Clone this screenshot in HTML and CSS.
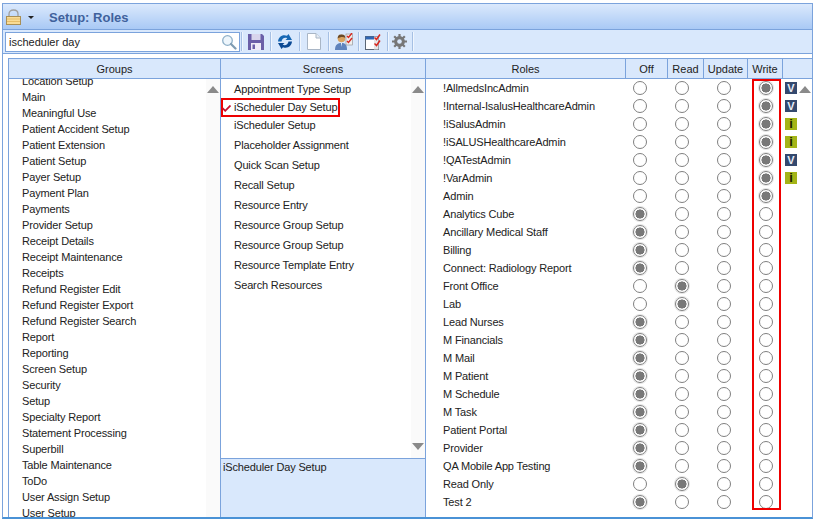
FILE: index.html
```html
<!DOCTYPE html>
<html lang="en">
<head>
<meta charset="utf-8">
<title>Setup: Roles</title>
<link rel="stylesheet" href="styles.css">
</head>
<body>
<div class="window">
  <header class="titlebar">
    <svg class="lock" width="15" height="16" viewBox="0 0 15 16"><path d="M3 8V5C3 2.500 5 1 7.500 1S12 2.500 12 5V8" fill="none" stroke="#a0a0a0" stroke-width="1.300"/><rect x=".5" y="7.500" width="14" height="8" fill="#f9dc96" stroke="#a98f55"/><path d="M1 10h13M1 12.500h13" stroke="#e6bd68"/></svg>
    <span class="caret"></span>
    <h1 class="title">Setup: Roles</h1>
  </header>
  <div class="toolbar">
    <div class="search">
      <span class="search-text">ischeduler day</span>
      <svg width="16" height="16" viewBox="0 0 16 16"><circle cx="6.500" cy="6.500" r="4.800" fill="#eef6fc" stroke="#8fb0c8" stroke-width="1.300"/><path d="M10 10l4.500 4.500" stroke="#7f9cb2" stroke-width="2.200" stroke-linecap="round"/></svg>
    </div>
    <span class="sep"></span>
    <span class="tool tool-save"><svg width="16" height="16" viewBox="0 0 16 16"><path d="M0 0h14l2 2v14H0z" fill="#6a5fa8"/><rect x="3.500" y="0" width="9" height="6" fill="#d8d5ec"/><rect x="3" y="9" width="10" height="7" fill="#eeecf7"/><rect x="4.500" y="10.500" width="2.500" height="4.500" fill="#6a5fa8"/></svg></span>
    <span class="sep"></span>
    <span class="tool tool-refresh"><svg width="16" height="15" viewBox="0 0 16 15"><path d="M1 7.500C1.300 3 5.500 0 10 1.800L11.500 0 15 6H8.500L10.300 4.200C7.500 3 5 4.500 4.500 7.500z" fill="#1667b4"/><path d="M15 7.500C14.700 12 10.500 15 6 13.200L4.500 15 1 9H7.500L5.700 10.800C8.500 12 11 10.500 11.500 7.500z" fill="#0c4a94"/></svg></span>
    <span class="sep"></span>
    <span class="tool tool-page"><svg width="14" height="17" viewBox="0 0 14 17"><path d="M.5 .5H9L13.500 5V16.500H.5z" fill="#fff" stroke="#a9b6c6"/><path d="M9 .5V5H13.500" fill="#e6ecf3" stroke="#a9b6c6"/></svg></span>
    <span class="sep"></span>
    <span class="tool tool-user"><svg width="18" height="17" viewBox="0 0 18 17"><circle cx="6.500" cy="5.500" r="3.800" fill="#d9a35f"/><path d="M2.700 5.500C2.700 2 4.500 1.500 6.500 1.500S10.300 2 10.300 5C8.500 3.500 5 4 2.700 5.500z" fill="#6b4a25"/><path d="M0 17C0 11.500 3 10 6.500 10S12 11.500 12 17z" fill="#5f83bd"/><path d="M6 10l.5 4 .5-4z" fill="#fff"/><rect x="11" y="1" width="6.500" height="11" fill="#eee" stroke="#8a8a8a" stroke-width=".6"/><path d="M12 3l1.500 1.500L17 0M12 8l1.500 1.500L17 5" fill="none" stroke="#d8281f" stroke-width="1.400"/></svg></span>
    <span class="sep"></span>
    <span class="tool tool-win"><svg width="16" height="16" viewBox="0 0 16 16"><rect x=".5" y="2.500" width="13" height="13" fill="#fff" stroke="#5a6675"/><rect x=".5" y="2.500" width="13" height="3" fill="#2f66b4"/><rect x="9" y="2.500" width="4.500" height="13" fill="#e6e6e6"/><path d="M9.500 3.500l2 2 3.500-5M9.500 9.500l2 2 3.500-5" fill="none" stroke="#d8281f" stroke-width="1.500"/></svg></span>
    <span class="sep"></span>
    <span class="tool tool-gear"><svg width="15" height="15" viewBox="0 0 15 15"><circle cx="7.500" cy="7.500" r="4" fill="none" stroke="#777" stroke-width="2.800"/><path d="M7.500 0v15M0 7.500h15M2.200 2.200l10.600 10.600M12.800 2.200L2.200 12.800" stroke="#777" stroke-width="2.200"/><circle cx="7.500" cy="7.500" r="2.300" fill="#d9e8fc"/></svg></span>
    <span class="sep"></span>
  </div>
  <main class="content">
    <div class="table">
      <div class="head">
        <div class="h h-groups">Groups</div>
        <div class="h h-screens">Screens</div>
        <div class="h h-roles">Roles</div>
        <div class="h h-off">Off</div>
        <div class="h h-read">Read</div>
        <div class="h h-update">Update</div>
        <div class="h h-write">Write</div>
        <div class="h h-flag"></div>
      </div>
      <div class="body">
        <section class="col-groups">
          <ul class="groups">
            <li>Location Setup</li><li>Main</li><li>Meaningful Use</li><li>Patient Accident Setup</li><li>Patient Extension</li><li>Patient Setup</li><li>Payer Setup</li><li>Payment Plan</li><li>Payments</li><li>Provider Setup</li><li>Receipt Details</li><li>Receipt Maintenance</li><li>Receipts</li><li>Refund Register Edit</li><li>Refund Register Export</li><li>Refund Register Search</li><li>Report</li><li>Reporting</li><li>Screen Setup</li><li>Security</li><li>Setup</li><li>Specialty Report</li><li>Statement Processing</li><li>Superbill</li><li>Table Maintenance</li><li>ToDo</li><li>User Assign Setup</li><li>User Setup</li>
          </ul>
          <div class="scrollbar"><span class="arrow-up"></span></div>
        </section>
        <section class="col-screens">
          <div class="screens-top">
            <ul class="screens">
              <li class="first">Appointment Type Setup</li>
              <li class="selected"><svg class="check" width="9" height="7" viewBox="0 0 9 7"><path d="M.5 3L3.200 5.800 8.500 .5" fill="none" stroke="#c8102e" stroke-width="1.800"/></svg><span>iScheduler Day Setup</span></li>
              <li class="third">iScheduler Setup</li>
              <li>Placeholder Assignment</li><li>Quick Scan Setup</li><li>Recall Setup</li><li>Resource Entry</li><li>Resource Group Setup</li><li>Resource Group Setup</li><li>Resource Template Entry</li><li>Search Resources</li>
            </ul>
            <div class="scrollbar scrollbar-both"><span class="arrow-up"></span><span class="arrow-down"></span></div>
          </div>
          <div class="description">iScheduler Day Setup</div>
        </section>
        <section class="col-roles">
          <div class="write-highlight"></div>
          <div class="role"><span class="name">!AllmedsIncAdmin</span><span class="cell"><i class="radio"></i></span><span class="cell"><i class="radio"></i></span><span class="cell"><i class="radio"></i></span><span class="cell last"><i class="radio on"></i></span><b class="flag flag-v">V</b></div>
          <div class="role"><span class="name">!Internal-IsalusHealthcareAdmin</span><span class="cell"><i class="radio"></i></span><span class="cell"><i class="radio"></i></span><span class="cell"><i class="radio"></i></span><span class="cell last"><i class="radio on"></i></span><b class="flag flag-v">V</b></div>
          <div class="role"><span class="name">!iSalusAdmin</span><span class="cell"><i class="radio"></i></span><span class="cell"><i class="radio"></i></span><span class="cell"><i class="radio"></i></span><span class="cell last"><i class="radio on"></i></span><b class="flag flag-i">i</b></div>
          <div class="role"><span class="name">!iSALUSHealthcareAdmin</span><span class="cell"><i class="radio"></i></span><span class="cell"><i class="radio"></i></span><span class="cell"><i class="radio"></i></span><span class="cell last"><i class="radio on"></i></span><b class="flag flag-i">i</b></div>
          <div class="role"><span class="name">!QATestAdmin</span><span class="cell"><i class="radio"></i></span><span class="cell"><i class="radio"></i></span><span class="cell"><i class="radio"></i></span><span class="cell last"><i class="radio on"></i></span><b class="flag flag-v">V</b></div>
          <div class="role"><span class="name">!VarAdmin</span><span class="cell"><i class="radio"></i></span><span class="cell"><i class="radio"></i></span><span class="cell"><i class="radio"></i></span><span class="cell last"><i class="radio on"></i></span><b class="flag flag-i">i</b></div>
          <div class="role"><span class="name">Admin</span><span class="cell"><i class="radio"></i></span><span class="cell"><i class="radio"></i></span><span class="cell"><i class="radio"></i></span><span class="cell last"><i class="radio on"></i></span></div>
          <div class="role"><span class="name">Analytics Cube</span><span class="cell"><i class="radio on"></i></span><span class="cell"><i class="radio"></i></span><span class="cell"><i class="radio"></i></span><span class="cell last"><i class="radio"></i></span></div>
          <div class="role"><span class="name">Ancillary Medical Staff</span><span class="cell"><i class="radio on"></i></span><span class="cell"><i class="radio"></i></span><span class="cell"><i class="radio"></i></span><span class="cell last"><i class="radio"></i></span></div>
          <div class="role"><span class="name">Billing</span><span class="cell"><i class="radio on"></i></span><span class="cell"><i class="radio"></i></span><span class="cell"><i class="radio"></i></span><span class="cell last"><i class="radio"></i></span></div>
          <div class="role"><span class="name">Connect: Radiology Report</span><span class="cell"><i class="radio on"></i></span><span class="cell"><i class="radio"></i></span><span class="cell"><i class="radio"></i></span><span class="cell last"><i class="radio"></i></span></div>
          <div class="role"><span class="name">Front Office</span><span class="cell"><i class="radio"></i></span><span class="cell"><i class="radio on"></i></span><span class="cell"><i class="radio"></i></span><span class="cell last"><i class="radio"></i></span></div>
          <div class="role"><span class="name">Lab</span><span class="cell"><i class="radio"></i></span><span class="cell"><i class="radio on"></i></span><span class="cell"><i class="radio"></i></span><span class="cell last"><i class="radio"></i></span></div>
          <div class="role"><span class="name">Lead Nurses</span><span class="cell"><i class="radio on"></i></span><span class="cell"><i class="radio"></i></span><span class="cell"><i class="radio"></i></span><span class="cell last"><i class="radio"></i></span></div>
          <div class="role"><span class="name">M Financials</span><span class="cell"><i class="radio on"></i></span><span class="cell"><i class="radio"></i></span><span class="cell"><i class="radio"></i></span><span class="cell last"><i class="radio"></i></span></div>
          <div class="role"><span class="name">M Mail</span><span class="cell"><i class="radio on"></i></span><span class="cell"><i class="radio"></i></span><span class="cell"><i class="radio"></i></span><span class="cell last"><i class="radio"></i></span></div>
          <div class="role"><span class="name">M Patient</span><span class="cell"><i class="radio on"></i></span><span class="cell"><i class="radio"></i></span><span class="cell"><i class="radio"></i></span><span class="cell last"><i class="radio"></i></span></div>
          <div class="role"><span class="name">M Schedule</span><span class="cell"><i class="radio on"></i></span><span class="cell"><i class="radio"></i></span><span class="cell"><i class="radio"></i></span><span class="cell last"><i class="radio"></i></span></div>
          <div class="role"><span class="name">M Task</span><span class="cell"><i class="radio on"></i></span><span class="cell"><i class="radio"></i></span><span class="cell"><i class="radio"></i></span><span class="cell last"><i class="radio"></i></span></div>
          <div class="role"><span class="name">Patient Portal</span><span class="cell"><i class="radio on"></i></span><span class="cell"><i class="radio"></i></span><span class="cell"><i class="radio"></i></span><span class="cell last"><i class="radio"></i></span></div>
          <div class="role"><span class="name">Provider</span><span class="cell"><i class="radio on"></i></span><span class="cell"><i class="radio"></i></span><span class="cell"><i class="radio"></i></span><span class="cell last"><i class="radio"></i></span></div>
          <div class="role"><span class="name">QA Mobile App Testing</span><span class="cell"><i class="radio on"></i></span><span class="cell"><i class="radio"></i></span><span class="cell"><i class="radio"></i></span><span class="cell last"><i class="radio"></i></span></div>
          <div class="role"><span class="name">Read Only</span><span class="cell"><i class="radio"></i></span><span class="cell"><i class="radio on"></i></span><span class="cell"><i class="radio"></i></span><span class="cell last"><i class="radio"></i></span></div>
          <div class="role"><span class="name">Test 2</span><span class="cell"><i class="radio on"></i></span><span class="cell"><i class="radio"></i></span><span class="cell"><i class="radio"></i></span><span class="cell last"><i class="radio"></i></span></div>
          <span class="arrow-up arrow-roles"></span>
        </section>
      </div>
    </div>
  </main>
</div>
</body>
</html>
```
FILE: styles.css
```css
* { box-sizing: border-box; }
html, body { margin: 0; padding: 0; background: #fff; overflow: hidden; }
body { height: 521px; font-family: "Liberation Sans", Arial, sans-serif; font-size: 11px; color: #222; }
ul { list-style: none; margin: 0; padding: 0; }

.window { margin: 3px 1px 0 2px; height: 516px; border: 1px solid #7ba3dc; border-bottom: 2px solid #4a92d6; display: flex; flex-direction: column; }

.titlebar { height: 26px; flex: none; display: flex; align-items: center; padding: 1px 0 0 3px; background: linear-gradient(#dbe9fc, #a9c9f5); border-bottom: 1px solid #7ba3dc; }
.lock { margin-top: 0; }
.caret { width: 0; height: 0; margin: 0 0 0 7px; border: 3px solid transparent; border-top: 3px solid #222; border-bottom: 0; }
.title { margin: 0 0 0 15px; font-size: 13px; font-weight: bold; color: #3f619c; }

.toolbar { height: 24px; flex: none; display: flex; align-items: center; padding-left: 2px; background: #d9e8fc; border-bottom: 1px solid #7ba3dc; }
.search { width: 235px; height: 20px; flex: none; display: flex; align-items: center; justify-content: space-between; padding: 0 2px 0 3px; background: #fff; border: 1px solid #7ba3dc; }
.search-text { font-size: 11px; color: #222; }
.sep { width: 1px; height: 19px; flex: none; background: #a6c0e4; box-shadow: 1px 0 0 #f0f6fe; }
.toolbar .search + .sep { margin-left: 1px; }
.tool { flex: none; display: flex; align-items: center; justify-content: center; height: 20px; }
.tool-save { width: 28px; }
.tool-refresh { width: 28px; }
.tool-page { width: 28px; }
.tool-user { width: 29px; }
.tool-win { width: 28px; }
.tool-gear { width: 24px; padding-right: 2px; }

.content { flex: 1; min-height: 0; padding: 4px 0 0 5px; background: #fff; }
.table { height: 100%; display: flex; flex-direction: column; border-top: 1px solid #7ba3dc; border-left: 1px solid #7ba3dc; overflow: hidden; }
.head { height: 20px; flex: none; display: flex; background: #d9e8fc; border-bottom: 1px solid #7ba3dc; }
.h { display: flex; align-items: center; justify-content: center; border-right: 1px solid #7ba3dc; font-size: 11px; color: #222; flex: none; }
.h-groups { width: 212px; }
.h-screens { width: 205px; }
.h-roles { width: 200px; }
.h-off { width: 42px; }
.h-read { width: 36px; }
.h-update { width: 44px; }
.h-write { width: 35px; }
.h-flag { flex: 1; border-right: 0; }

.body { flex: 1; min-height: 0; display: flex; letter-spacing: -0.15px; }
.col-groups { width: 212px; flex: none; display: flex; overflow: hidden; border-right: 1px solid #7ba3dc; }
.groups { flex: 1; margin-top: -6px; padding-left: 13px; }
.groups li { height: 16px; line-height: 16px; white-space: nowrap; }
.scrollbar { width: 14px; flex: none; display: flex; flex-direction: column; align-items: center; justify-content: space-between; padding: 7px 0 8px; background: #fafafa; }
.arrow-up { display: block; width: 0; height: 0; border: 6px solid transparent; border-top: 0; border-bottom: 7px solid #8a8a8a; }
.arrow-down { display: block; width: 0; height: 0; border: 6px solid transparent; border-bottom: 0; border-top: 7px solid #8a8a8a; }

.col-screens { width: 205px; flex: none; display: flex; flex-direction: column; border-right: 1px solid #7ba3dc; }
.screens-top { height: 379px; flex: none; display: flex; }
.screens { flex: 1; padding-top: 1px; }
.screens li { height: 20px; line-height: 20px; padding-left: 13px; white-space: nowrap; position: relative; }
.screens li.first { height: 18px; line-height: 18px; }
.screens li.selected { height: 19px; line-height: 18px; width: 119px; outline: 2px solid #ee0000; outline-offset: -2px; }
.screens li.third { height: 18px; line-height: 17px; }
.check { position: absolute; left: 1px; top: 7px; }
.description { flex: 1; padding: 2px 2px; background: #d9e8fc; border-top: 1px solid #7ba3dc; }

.col-roles { flex: 1; position: relative; overflow: hidden; }
.role { display: grid; grid-template-columns: 193px 42px 42px 42px 40px 12px; height: 18px; align-items: center; }
.name { padding-left: 17px; white-space: nowrap; }
.cell { display: flex; justify-content: center; }
.cell.last { padding-left: 2px; }
.radio { display: block; width: 14px; height: 14px; border-radius: 50%; border: 1px solid #808080; background: #fff; }
.radio.on { background: radial-gradient(circle, #787878 0, #787878 4.300px, #fff 4.800px); box-shadow: 0 0 0 1px #e4e4e4; }
.flag { margin-left: 0; width: 12px; height: 12px; display: flex; align-items: center; justify-content: center; font-size: 11px; font-weight: bold; line-height: 12px; letter-spacing: 0; }
.flag-v { background: #34496e; color: #e8eef8; }
.flag-i { background: #a4b417; color: #1c1c00; font-size: 13px; }
.write-highlight { position: absolute; left: 326px; top: 0; width: 29px; height: 431px; border: 2px solid #ee0000; pointer-events: none; }
.arrow-roles { position: absolute; left: 373px; top: 7px; }
```
